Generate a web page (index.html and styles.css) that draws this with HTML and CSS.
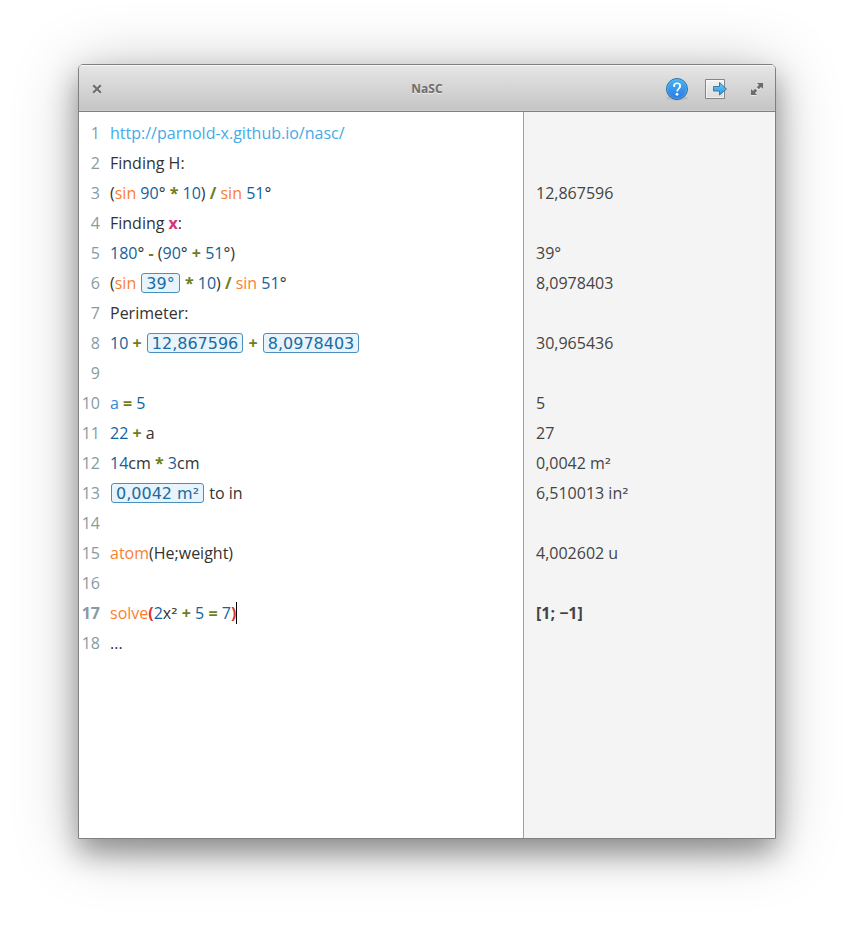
FILE: index.html
```html
<!DOCTYPE html>
<html lang="en">
<head>
<meta charset="utf-8">
<meta name="viewport" content="width=device-width, initial-scale=1">
<title>NaSC</title>
<link rel="stylesheet" href="styles.css">
</head>
<body>
<main class="window">
  <header class="titlebar">
    <div class="side">
      <button class="tool close" type="button" aria-label="Close">
        <svg width="10" height="10" viewBox="0 0 10 10"><path d="M2 3l6 6M8 3L2 9" stroke="#fff" stroke-width="2" opacity=".6"/><path d="M2 2l6 6M8 2L2 8" stroke="#6e6e6e" stroke-width="2.200" stroke-linecap="square"/></svg>
      </button>
    </div>
    <h1 class="title">NaSC</h1>
    <div class="side end">
      <button class="tool" type="button" aria-label="Help">
        <svg width="24" height="24" viewBox="0 0 24 24">
          <defs><linearGradient id="help" x1="0" y1="0" x2="0" y2="1"><stop offset="0" stop-color="#43b5f0"/><stop offset="1" stop-color="#2c78e4"/></linearGradient></defs>
          <ellipse cx="12" cy="21" rx="11" ry="2.500" fill="#000" opacity=".08"/>
          <circle cx="12" cy="12" r="10.500" fill="url(#help)" stroke="#2b6fa8"/>
          <circle cx="12" cy="12" r="9.500" fill="none" stroke="#7ecbf8" opacity=".4"/>
          <path d="M8.900 9C8.900 7 10 6.200 12 6.200c2.200 0 3.400 1 3.400 2.900 0 2.500-3.300 2.600-3.300 5.300" fill="none" stroke="#fff" stroke-width="1.500"/>
          <circle cx="9.300" cy="9" r="1.100" fill="#fff"/><path d="M14 7.200c1.200 1 1.100 2.600 0 3.800" fill="none" stroke="#fff" stroke-width="1.500"/>
          <circle cx="12" cy="17.300" r="1.400" fill="#fff"/>
        </svg>
      </button>
      <button class="tool" type="button" aria-label="Export">
        <svg width="24" height="24" viewBox="0 0 24 24">
          <defs><linearGradient id="paper" x1="0" y1="0" x2="0" y2="1"><stop offset="0" stop-color="#f2f2f2"/><stop offset="1" stop-color="#dcdcdc"/></linearGradient><linearGradient id="arrow" x1="0" y1="0" x2="0" y2="1"><stop offset="0" stop-color="#67cdf5"/><stop offset="1" stop-color="#3196df"/></linearGradient></defs>
          <path d="M.5 2.500h19v19h-19z" fill="url(#paper)" stroke="#858585"/>
          <path d="M1.500 3.500h17v17h-17z" fill="none" stroke="#fff" opacity=".6"/>
          <path d="M8.500 9.500h6v-4l7 6.500-7 6v-4h-6z" fill="url(#arrow)" stroke="#3a78a6" stroke-linejoin="round"/>
        </svg>
      </button>
      <button class="tool" type="button" aria-label="Maximize">
        <svg width="24" height="24" viewBox="0 0 24 24"><defs><path id="expand" d="M12 6h6v6l-2-2-2.500 2.500-2-2L14 8zM6 12l2 2 2.300-2.300 2 2L10 16l2 2H6z"/></defs><use href="#expand" y="1" fill="#fff" opacity=".5"/><path d="M12 6h6v6l-2-2-2.200 2.200-2-2L14 8zM6 12l2 2 2.200-2.200 2 2L10 16l2 2H6z" fill="#6b6b6b"/></svg>
      </button>
    </div>
  </header>
  <div class="sheet">
    <ol class="editor">
      <li><span class="no">1</span><code><a href="http://parnold-x.github.io/nasc/">http://parnold-x.github.io/nasc/</a></code></li>
      <li><span class="no">2</span><code>Finding H:</code></li>
      <li><span class="no">3</span><code>(<span class="fn">sin</span> <span class="num">90</span>° <b class="op">*</b> <span class="num">10</span>) <b class="op">/</b> <span class="fn">sin</span> <span class="num">51</span>°</code></li>
      <li><span class="no">4</span><code>Finding <b class="unknown">x</b>:</code></li>
      <li><span class="no">5</span><code><span class="num">180</span>° <b class="op">-</b> (<span class="num">90</span>° <b class="op">+</b> <span class="num">51</span>°)</code></li>
      <li><span class="no">6</span><code>(<span class="fn">sin</span> <span class="chip">39°</span> <b class="op">*</b> <span class="num">10</span>) <b class="op">/</b> <span class="fn">sin</span> <span class="num">51</span>°</code></li>
      <li><span class="no">7</span><code>Perimeter:</code></li>
      <li><span class="no">8</span><code><span class="num">10</span> <b class="op">+</b> <span class="chip">12,867596</span> <b class="op">+</b> <span class="chip">8,0978403</span></code></li>
      <li><span class="no">9</span><code></code></li>
      <li><span class="no">10</span><code><span class="var">a</span> <b class="op">=</b> <span class="num">5</span></code></li>
      <li><span class="no">11</span><code><span class="num">22</span> <b class="op">+</b> a</code></li>
      <li><span class="no">12</span><code><span class="num">14</span>cm <b class="op">*</b> <span class="num">3</span>cm</code></li>
      <li><span class="no">13</span><code><span class="chip">0,0042 m²</span> to in</code></li>
      <li><span class="no">14</span><code></code></li>
      <li><span class="no">15</span><code><span class="fn">atom</span>(He;weight)</code></li>
      <li><span class="no">16</span><code></code></li>
      <li class="current"><span class="no">17</span><code><span class="fn">solve</span><b class="match">(</b><span class="num">2</span>x<span class="power">²</span> <b class="op">+</b> <span class="num">5</span> <b class="op">=</b> <span class="num">7</span><b class="match">)</b></code><span class="caret"></span></li>
      <li><span class="no">18</span><code>...</code></li>
    </ol>
    <ol class="results">
      <li></li>
      <li></li>
      <li>12,867596</li>
      <li></li>
      <li>39°</li>
      <li>8,0978403</li>
      <li></li>
      <li>30,965436</li>
      <li></li>
      <li>5</li>
      <li>27</li>
      <li>0,0042 m<span class="power">²</span></li>
      <li>6,510013 in<span class="power">²</span></li>
      <li></li>
      <li>4,002602 u</li>
      <li></li>
      <li class="current">[1; −1]</li>
      <li></li>
    </ol>
  </div>
</main>
</body>
</html>
```
FILE: styles.css
```css
* {
  box-sizing: border-box;
}

body {
  display: flex;
  min-height: 100vh;
  margin: 0;
  padding: 64px 78px 92px;
  background: #fff;
  color: #333;
  font: 16px/30px "Open Sans", sans-serif;
}

.window {
  display: flex;
  flex: 1;
  flex-direction: column;
  border: 1px solid #808080;
  border-radius: 5px 5px 0 0;
  box-shadow: 0 14px 28px rgba(0, 0, 0, .34), 0 6px 64px rgba(0, 0, 0, .26);
  overflow: hidden;
}

.titlebar {
  display: grid;
  grid-template-columns: 1fr auto 1fr;
  align-items: center;
  height: 47px;
  padding: 2px 6px 0;
  border-bottom: 1px solid #808080;
  background: linear-gradient(#e6e6e6, #c4c4c4);
  box-shadow: inset 0 1px #f7f7f7, inset 0 -1px #cfcfcf;
}

.title {
  margin: 0;
  color: #6e6e6e;
  font-size: 12px;
  line-height: 24px;
  text-shadow: 0 1px rgba(255, 255, 255, .6);
}

.side {
  display: flex;
  gap: 16px;
}

.end {
  justify-content: flex-end;
}

.tool {
  display: flex;
  align-items: center;
  justify-content: center;
  width: 24px;
  height: 24px;
  padding: 0;
  border: 0;
  background: none;
}

.sheet {
  display: flex;
  flex: 1;
  background: #fff;
}

.editor,
.results {
  margin: 0;
  padding: 6px 0;
  list-style: none;
}

.editor {
  flex: 1;
}

.editor li {
  display: flex;
  align-items: center;
  height: 30px;
}

.no {
  width: 21px;
  margin-right: 10px;
  color: #879ba1;
  text-align: right;
}

code {
  font: inherit;
  white-space: pre;
}

.results {
  width: 252px;
  padding-left: 12px;
  border-left: 1px solid #a0a0a0;
  background: #f4f4f4;
  color: #444;
}

.results li {
  height: 30px;
}

.current .no,
.results .current {
  font-weight: 700;
}

a {
  color: #45aae8;
  text-decoration: none;
}

.fn {
  color: #f97f33;
}

.num {
  color: #12629b;
}

.var {
  color: #2e8bd8;
}

.op {
  color: #6f7e1c;
}

.unknown {
  color: #d6337e;
}

.match {
  color: #dc322f;
}

.power {
  font-family: "DejaVu Sans", sans-serif;
  line-height: 1;
}

.chip {
  display: inline-block;
  height: 20px;
  margin: 0 1px;
  padding: 0 4px;
  border: 1px solid #4d8fbb;
  border-radius: 3px;
  background: #e8f4fc;
  color: #206b9f;
  font-family: "DejaVu Sans", sans-serif;
  line-height: 20px;
}

.caret {
  width: 1px;
  height: 22px;
  background: #000;
}
```
